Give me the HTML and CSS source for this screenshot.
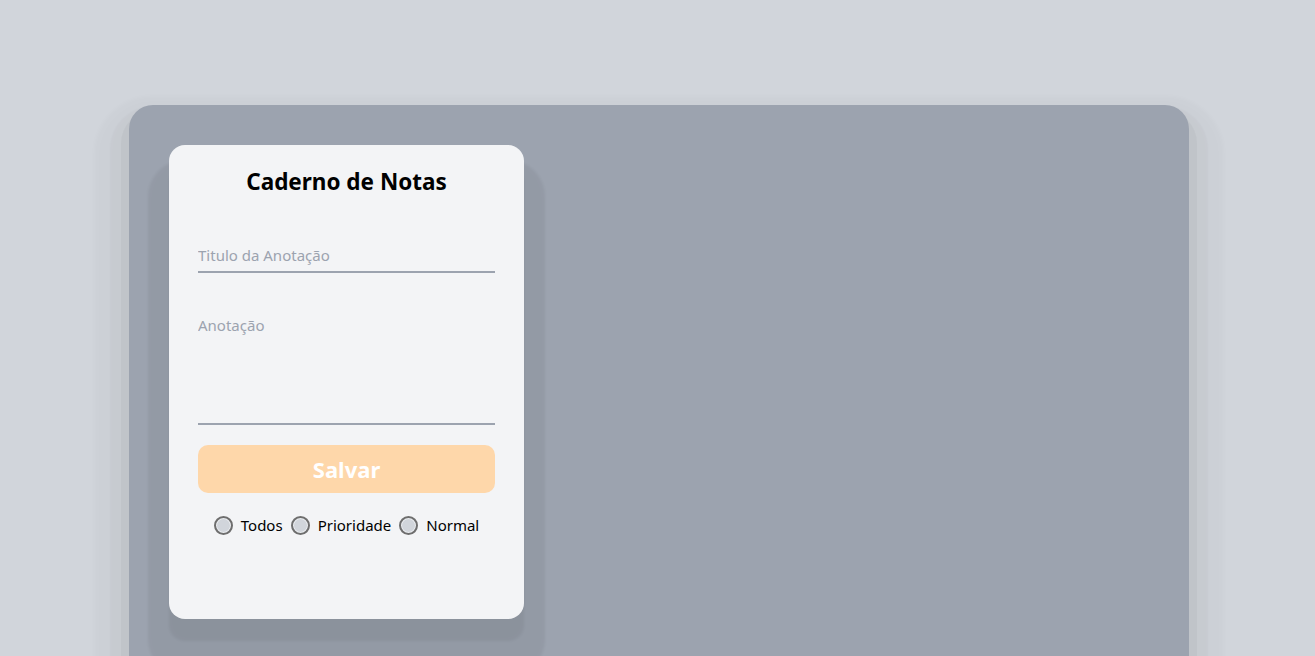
FILE: index.html
```html
<!DOCTYPE html>
<html lang="pt-BR">
<head>
<meta charset="utf-8">
<title>Caderno de Notas</title>
<link rel="stylesheet" href="styles.css">
</head>
<body>
<main class="board">
  <section class="card">
    <h1 class="title">Caderno de Notas</h1>
    <form class="form">
      <input class="field" type="text" placeholder="Titulo da Anotação">
      <textarea class="field area" placeholder="Anotação"></textarea>
      <button class="save" type="button">Salvar</button>
      <div class="filters">
        <label class="opt"><input type="radio" name="f" class="radio"><span>Todos</span></label>
        <label class="opt"><input type="radio" name="f" class="radio"><span>Prioridade</span></label>
        <label class="opt"><input type="radio" name="f" class="radio"><span>Normal</span></label>
      </div>
    </form>
  </section>
</main>
</body>
</html>
```
FILE: styles.css
```css
html, body {
  margin: 0;
  height: 100%;
  overflow: hidden;
}
body {
  background: #d1d5db;
  font-family: "Noto Sans", "Open Sans", sans-serif;
  padding: 105px 0 0 3px;
  box-sizing: border-box;
}
.board {
  width: 1060px;
  height: 580px;
  margin: 0 auto;
  background: #9ca3af;
  border-radius: 24px;
  padding: 40px;
  box-sizing: border-box;
  box-shadow:
    0 14px 0 8px rgba(0,0,0,0.03),
    0 20px 2px 19px rgba(0,0,0,0.025),
    0 26px 4px 35px rgba(0,0,0,0.018);
}
.card {
  width: 355px;
  height: 474px;
  background: #f3f4f6;
  border-radius: 16px;
  padding: 21px 29px 0;
  box-sizing: border-box;
  box-shadow:
    0 22px 3px 0 rgba(0,0,0,0.05),
    0 36px 3px 21px rgba(0,0,0,0.055);
}
.title {
  margin: 0;
  text-align: center;
  font-size: 22.5px;
  line-height: 32px;
  font-weight: 700;
  color: #000;
}
.form {
  display: flex;
  flex-direction: column;
  margin-top: 43px;
}
.field {
  font-family: inherit;
  font-size: 15px;
  color: #111;
  background: transparent;
  border: 0;
  border-bottom: 2px solid #9ca3af;
  outline: none;
  padding: 3px 0 6px;
  height: 32px;
  box-sizing: border-box;
  width: 100%;
}
.field::placeholder {
  color: #9ca3af;
}
.area {
  margin-top: 40px;
  height: 112px;
  resize: none;
  padding-top: 2px;
}
.save {
  margin-top: 20px;
  height: 48px;
  border: 0;
  border-radius: 10px;
  background: #fed7aa;
  color: #fff;
  font-family: inherit;
  font-size: 22px;
  font-weight: 700;
}
.filters {
  display: flex;
  justify-content: center;
  gap: 8px;
  margin-top: 22px;
  font-size: 15px;
  color: #000;
}
.opt {
  display: flex;
  align-items: center;
  gap: 8px;
}
.radio {
  appearance: none;
  -webkit-appearance: none;
  margin: 0;
  width: 19px;
  height: 19px;
  border-radius: 50%;
  border: 2px solid #6e6e6e;
  background: #d1d5db;
  box-shadow: inset 0 0 0 1px #eceef1;
  box-sizing: border-box;
}
```
